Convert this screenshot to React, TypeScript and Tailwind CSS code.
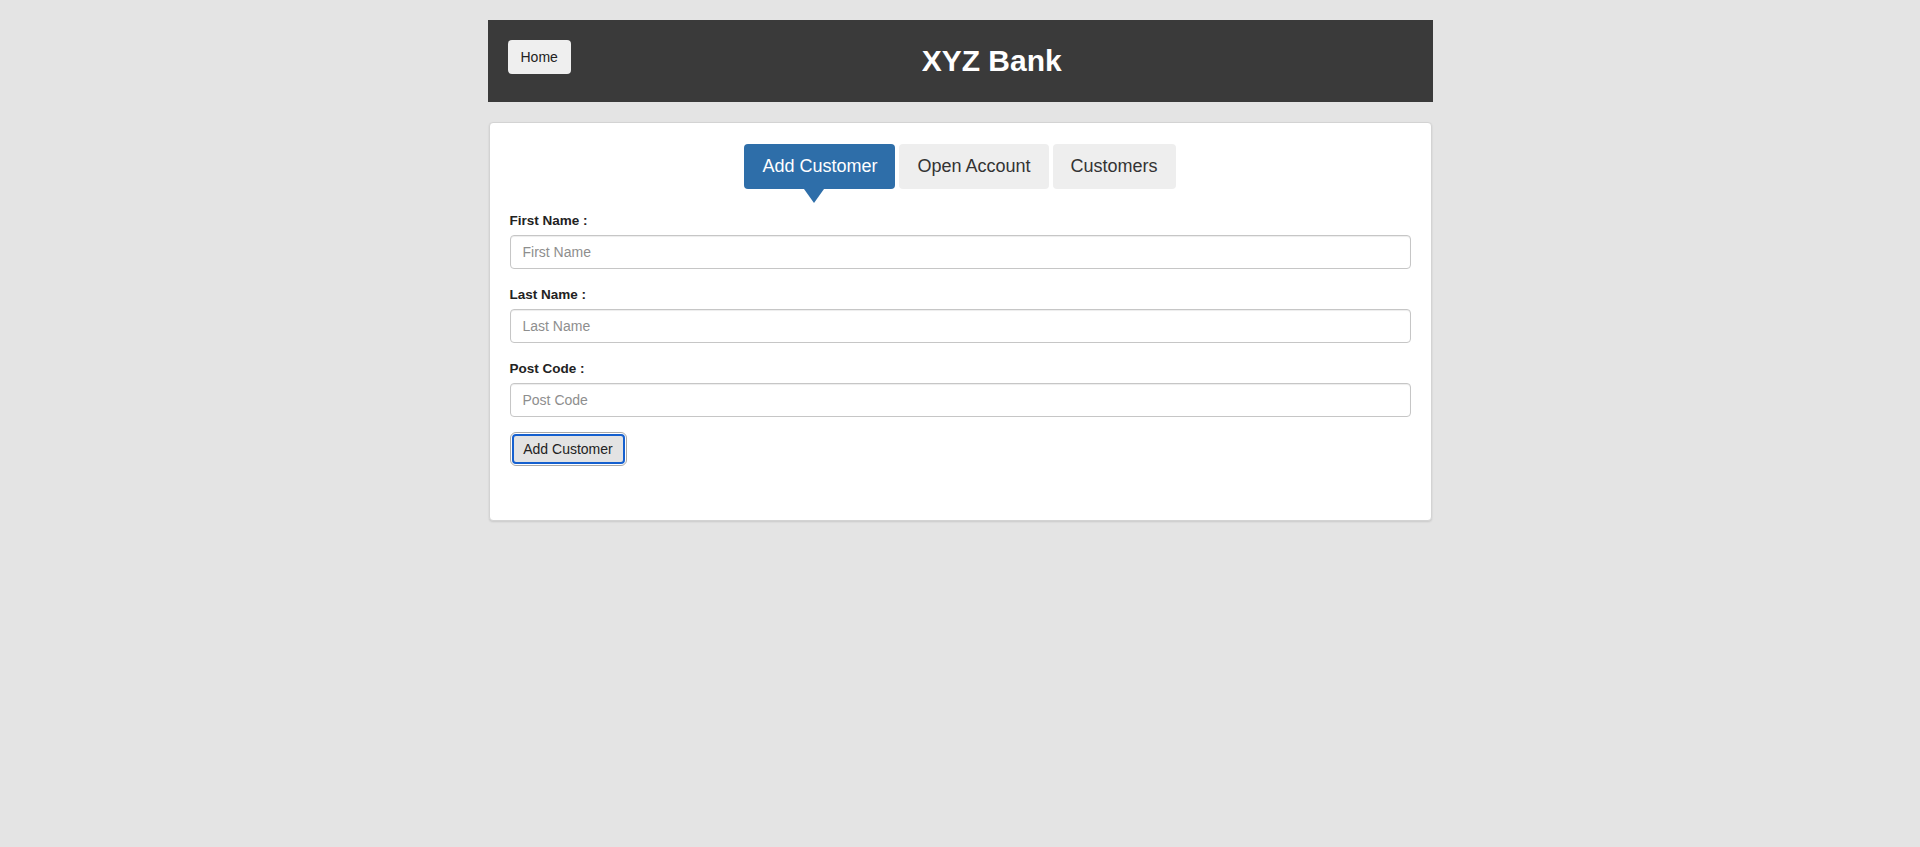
import { useState } from 'react';

type Tab = 'add' | 'open' | 'list';

const tabs: { id: Tab; label: string }[] = [
  { id: 'add', label: 'Add Customer' },
  { id: 'open', label: 'Open Account' },
  { id: 'list', label: 'Customers' },
];

const fields = [
  { label: 'First Name :', placeholder: 'First Name' },
  { label: 'Last Name :', placeholder: 'Last Name' },
  { label: 'Post Code :', placeholder: 'Post Code' },
];

function App() {
  const [active, setActive] = useState<Tab>('add');

  return (
    <div
      className="min-h-screen bg-[#e4e4e4] pt-[20px] text-[#333]"
      style={{ fontFamily: '"Liberation Sans", Helvetica, Arial, sans-serif' }}
    >
      <div className="w-[945px] mx-auto">
        {/* Header */}
        <header className="h-[82px] bg-[#3a3a3a] flex items-center px-[20px]">
          <button className="self-start mt-[20px] h-[34px] px-[13px] bg-[#efefef] rounded-[4px] text-[14px] text-[#222]">
            Home
          </button>
          <div className="flex-1 text-center text-white font-bold text-[30px] leading-none">
            XYZ Bank
          </div>
        </header>

        {/* Manager panel */}
        <div className="mt-[20px] mx-[1px] bg-white border border-[#d3d3d3] rounded-[4px] shadow-[0_1px_2px_rgba(0,0,0,0.12)] px-[20px] pt-[21px] pb-[56px]">
          <div className="flex justify-center gap-[4px]">
            {tabs.map((t) => {
              const on = t.id === active;
              return (
                <button
                  key={t.id}
                  onClick={() => setActive(t.id)}
                  className={`relative h-[45px] px-[18px] rounded-[4px] text-[18px] ${
                    on ? 'bg-[#2e6ea9] text-white' : 'bg-[#eeeeee] text-[#333]'
                  }`}
                >
                  {t.label}
                  {on && (
                    <span className="absolute top-full left-[60px] w-0 h-0 border-x-[10px] border-x-transparent border-t-[14px] border-t-[#2e6ea9]" />
                  )}
                </button>
              );
            })}
          </div>

          <form className="mt-[23px]" onSubmit={(e) => e.preventDefault()}>
            {fields.map((f, i) => (
              <div key={f.label} className={i > 0 ? 'mt-[17px]' : ''}>
                <label className="block h-[18px] leading-[18px] text-[13.5px] font-bold text-[#222] mb-[5px]">
                  {f.label}
                </label>
                <input
                  placeholder={f.placeholder}
                  className="block w-full h-[34px] px-[12px] border border-[#c6c6c6] rounded-[4px] text-[14px] text-[#333] placeholder:text-[#8e8e8e] shadow-[inset_0_1px_1px_rgba(0,0,0,0.075)] outline-none"
                />
              </div>
            ))}
            <button
              type="submit"
              className="block mt-[17px] ml-[2px] h-[30px] w-[113px] bg-[#e3e3e3] border-2 border-[#1560cf] rounded-[4px] outline-1 outline-offset-1 outline-[#a9a9a9] text-[14px] text-[#222]"
            >
              Add Customer
            </button>
          </form>
        </div>
      </div>
    </div>
  );
}

export default App;
